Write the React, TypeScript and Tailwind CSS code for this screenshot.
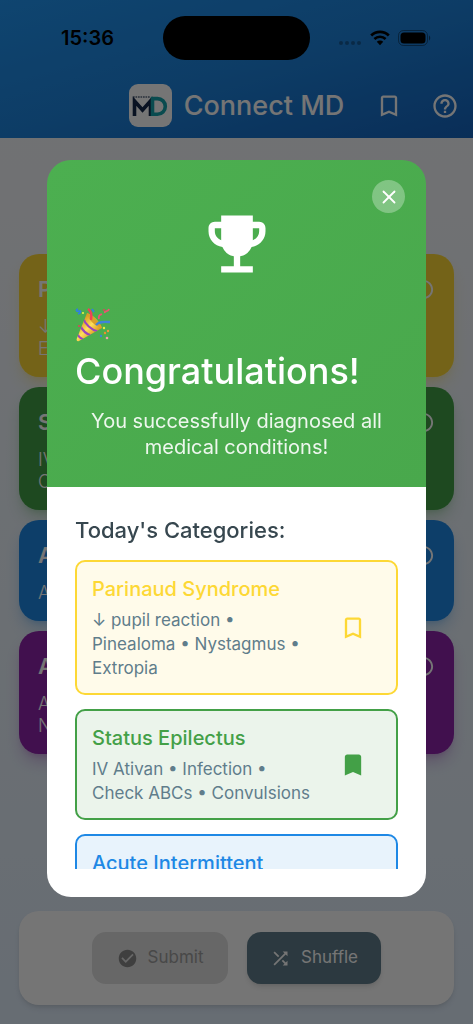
import React, { useState } from "react";
import { X } from "lucide-react";
import {
  MdBookmark,
  MdBookmarkBorder,
  MdCheckCircle,
  MdEmojiEvents,
  MdHelpOutline,
  MdInfoOutline,
  MdShuffle,
} from "react-icons/md";

interface Category {
  id: string;
  title: string;
  words: string;
  tile: string;
  card: string;
  accent: string;
}

const categories: Category[] = [
  {
    id: "parinaud",
    title: "Parinaud Syndrome",
    words: "↓ pupil reaction • Pinealoma • Nystagmus • Extropia",
    tile: "bg-[#fdd835] shadow-[#fdd835]/30",
    card: "border-[#fdd835] bg-[#fffbea]",
    accent: "text-[#fdd835]",
  },
  {
    id: "status",
    title: "Status Epilectus",
    words: "IV Ativan • Infection • Check ABCs • Convulsions",
    tile: "bg-[#43a047] shadow-[#43a047]/30",
    card: "border-[#43a047] bg-[#ebf4eb]",
    accent: "text-[#43a047]",
  },
  {
    id: "porphyria",
    title: "Acute Intermittent Porphyria",
    words: "Abdominal pain",
    tile: "bg-[#1e88e5] shadow-[#1e88e5]/30",
    card: "border-[#1e88e5] bg-[#e8f3fc]",
    accent: "text-[#1e88e5]",
  },
  {
    id: "glaucoma",
    title: "Acute Glaucoma",
    words: "Aching eye • Colored halos • Blurred vision • Nausea",
    tile: "bg-[#8e24aa] shadow-[#8e24aa]/30",
    card: "border-[#8e24aa] bg-[#f4e9f7]",
    accent: "text-[#8e24aa]",
  },
];

function StatusBar() {
  return (
    <div className="grid grid-cols-[1fr_147px_1fr] items-center pt-4">
      <span className="pl-[61px] text-xl font-semibold text-black">15:36</span>
      <div className="h-11 rounded-full bg-black" />
      <div className="flex items-center justify-end gap-2 pr-[42px] text-black">
        <svg width="24" height="20" viewBox="0 0 24 20" fill="currentColor" opacity="0.3">
          <circle cx="3" cy="15" r="2" />
          <circle cx="9" cy="15" r="2" />
          <circle cx="15" cy="15" r="2" />
          <circle cx="21" cy="15" r="2" />
        </svg>
        <svg width="20" height="16" viewBox="0 0 20 16" fill="none" stroke="currentColor">
          <path d="M1.2 5.4a12.6 12.6 0 0 1 17.6 0" strokeWidth="2.8" />
          <path d="M4.4 9a8 8 0 0 1 11.2 0" strokeWidth="2.6" />
          <path d="M10 15.2 6.8 11.8a4.6 4.6 0 0 1 6.4 0z" fill="currentColor" stroke="none" />
        </svg>
        <svg width="33" height="16" viewBox="0 0 33 16">
          <rect x="0.5" y="0.5" width="29" height="15" rx="5" fill="none" stroke="currentColor" opacity="0.4" />
          <rect x="2.5" y="2.5" width="25" height="11" rx="3.5" fill="currentColor" />
          <path d="M31 5.5c1.6.6 1.6 4.4 0 5z" fill="currentColor" opacity="0.5" />
        </svg>
      </div>
    </div>
  );
}

function Logo() {
  return (
    <div className="flex h-[43px] w-[43px] flex-col items-center justify-center rounded-[9px] bg-white">
      <svg width="37" height="22" viewBox="0 0 37 22" fill="none">
        <path d="M2.5 21V6l8 9 8-9v15" stroke="#14284b" strokeWidth="3.6" />
        <path d="M20.5 3.6h5a7.8 7.8 0 0 1 0 15.6h-5z" stroke="#14a3ac" strokeWidth="3.6" />
        <path d="M1 2h17" stroke="#14284b" strokeWidth="1.6" strokeDasharray="1.7 .8" opacity="0.7" />
      </svg>
    </div>
  );
}

function PartyPopper() {
  return (
    <svg width="36" height="36" viewBox="0 0 36 36" fill="none">
      <defs>
        <linearGradient id="cone" x1="6" y1="14" x2="20" y2="28" gradientUnits="userSpaceOnUse">
          <stop stopColor="#d99a22" />
          <stop offset="0.5" stopColor="#ffdf5a" />
          <stop offset="1" stopColor="#d8921f" />
        </linearGradient>
        <clipPath id="cone-clip">
          <path d="M12 6c6 2 13 9 15 15L4 34c-2 1-3-1-2-3z" />
        </clipPath>
      </defs>
      <path d="M12 6c6 2 13 9 15 15L4 34c-2 1-3-1-2-3z" fill="url(#cone)" />
      <g clipPath="url(#cone-clip)" stroke="#9a45bd" strokeWidth="2.2">
        <path d="M8 11c2 6 8 12 16 14" />
        <path d="M5 18c2 5 6 9 12 11" />
        <path d="M2 26c1 3 4 6 8 7" />
      </g>
      <path d="M12 6c6 2 13 9 15 15-6-1-14-8-15-15z" fill="#d9a02a" />
      <path d="M16 13c1-5 0-9-3-11" stroke="#ee4058" strokeWidth="2.4" />
      <path d="M21 18c4-4 8-3 14-3" stroke="#3f83dc" strokeWidth="2.4" />
      <path d="M3 2c-3 1-1 3 1 2s2 2-1 3M17 2l2 3" stroke="#2f7fe0" strokeWidth="1.8" />
      <path d="M24 12c-1-4 1-4 3-5M30 6c-1-3 3 0 4-4" stroke="#ef5272" strokeWidth="1.8" />
      <g>
        <circle cx="8" cy="6" r="1.1" fill="#e8ef42" />
        <circle cx="29" cy="21" r="1.2" fill="#e8ef42" />
        <circle cx="33" cy="24" r="1.2" fill="#f09a3c" />
        <circle cx="30" cy="26" r="1.2" fill="#ef8f2f" />
        <circle cx="26" cy="29" r="1.2" fill="#3f83dc" />
        <circle cx="32" cy="31" r="1.3" fill="#f5a0b0" />
        <circle cx="4" cy="19" r="1.1" fill="#d9475c" />
        <circle cx="29" cy="3" r="1.1" fill="#d9475c" />
      </g>
    </svg>
  );
}

function SolvedTile({ category }: { category: Category }) {
  return (
    <div className={`rounded-[20px] px-[19px] pt-[19px] pb-[17px] text-white shadow-lg ${category.tile}`}>
      <div className="flex items-center justify-between">
        <h2 className="text-[22px] leading-8 font-semibold">{category.title}</h2>
        <MdInfoOutline size={23} />
      </div>
      <p className="mt-[11px] text-lg leading-[22px] font-light">{category.words}</p>
    </div>
  );
}

export default function App() {
  const [open, setOpen] = useState(true);
  const [saved, setSaved] = useState<string[]>(["status"]);

  const toggleSaved = (id: string) => {
    setSaved(saved.includes(id) ? saved.filter((s) => s !== id) : [...saved, id]);
  };

  return (
    <div className="flex min-h-screen flex-col bg-linear-to-b from-[#f8f9fa] to-[#e0edfb] font-['Inter','Liberation_Sans',sans-serif]">
      <header className="bg-linear-to-br from-[#2196f3] via-[#1e84de] to-[#1565c0] pb-[7px]">
        <StatusBar />
        <div className="mt-5 grid grid-cols-[1fr_auto_1fr] items-center">
          <div />
          <div className="flex items-center gap-3 py-1">
            <Logo />
            <h1 className="text-[27px] leading-[43px] font-medium text-white">Connect MD</h1>
          </div>
          <div className="flex justify-end text-white">
            <button aria-label="Saved" className="flex w-14 justify-center">
              <MdBookmarkBorder size={28} />
            </button>
            <button aria-label="Help" className="flex w-14 justify-center">
              <MdHelpOutline size={28} />
            </button>
          </div>
        </div>
      </header>

      <main className="flex flex-1 flex-col px-[19px] pb-[19px]">
        <div className="flex flex-1 flex-col gap-[10px] pt-[116px]">
          {categories.map((category) => (
            <SolvedTile key={category.id} category={category} />
          ))}
        </div>
        <div className="flex justify-center gap-[19px] rounded-[20px] bg-white py-[21px] shadow-md">
          <button
            disabled
            className="flex h-[52px] w-[136px] items-center justify-center gap-[10px] rounded-[14px] bg-[#e0e0e0] text-[17px] text-[#9e9e9e]"
          >
            <MdCheckCircle size={21} className="text-[#8a8a8a]" /> Submit
          </button>
          <button className="flex h-[52px] w-[134px] items-center justify-center gap-[10px] rounded-[14px] bg-[#607d8b] text-[17px] text-white shadow-md">
            <MdShuffle size={21} /> Shuffle
          </button>
        </div>
      </main>

      {open && (
        <div className="fixed inset-0 flex flex-col bg-black/54 px-[47px] pt-40 pb-[127px]">
          <div
            role="dialog"
            aria-labelledby="dialog-title"
            className="relative flex min-h-0 flex-1 flex-col overflow-hidden rounded-3xl"
          >
            <button
              aria-label="Close"
              onClick={() => setOpen(false)}
              className="absolute top-5 right-[21px] flex h-[33px] w-[33px] items-center justify-center rounded-full bg-white/30 text-white"
            >
              <X size={22} />
            </button>
            <div className="shrink-0 bg-linear-to-br from-[#4caf50] to-[#49a84c] px-7 pt-[46px] pb-[27px] text-white">
              <MdEmojiEvents size={76} className="mx-auto" />
              <div className="mt-[19px] flex h-[47px] items-center">
                <PartyPopper />
              </div>
              <h2 id="dialog-title" className="text-[36px] leading-[47px] font-medium">
                Congratulations!
              </h2>
              <p className="mt-[13px] text-center text-xl leading-[26px] text-white/90">
                You successfully diagnosed all medical conditions!
              </p>
            </div>
            <div className="flex min-h-0 flex-1 flex-col bg-white p-7">
              <h3 className="text-[22px] leading-[31px] font-medium text-[#37474f]">
                Today's Categories:
              </h3>
              <div className="mt-[14px] flex min-h-0 flex-1 flex-col gap-[14px] overflow-hidden">
                {categories.map((category) => (
                  <div
                    key={category.id}
                    className={`flex shrink-0 items-center rounded-[10px] border-2 px-[15px] py-[13px] ${category.card}`}
                  >
                    <div className="min-w-0 flex-1 pr-2">
                      <h4 className={`text-xl leading-7 font-medium ${category.accent}`}>
                        {category.title}
                      </h4>
                      <p className="mt-[5px] text-[17px] leading-6 text-[#607d8b]">
                        {category.words}
                      </p>
                    </div>
                    <button
                      aria-label={`Save ${category.title}`}
                      onClick={() => toggleSaved(category.id)}
                      className={`flex w-14 justify-center ${category.accent}`}
                    >
                      {saved.includes(category.id) ? (
                        <MdBookmark size={28} />
                      ) : (
                        <MdBookmarkBorder size={28} />
                      )}
                    </button>
                  </div>
                ))}
              </div>
            </div>
          </div>
        </div>
      )}
    </div>
  );
}
